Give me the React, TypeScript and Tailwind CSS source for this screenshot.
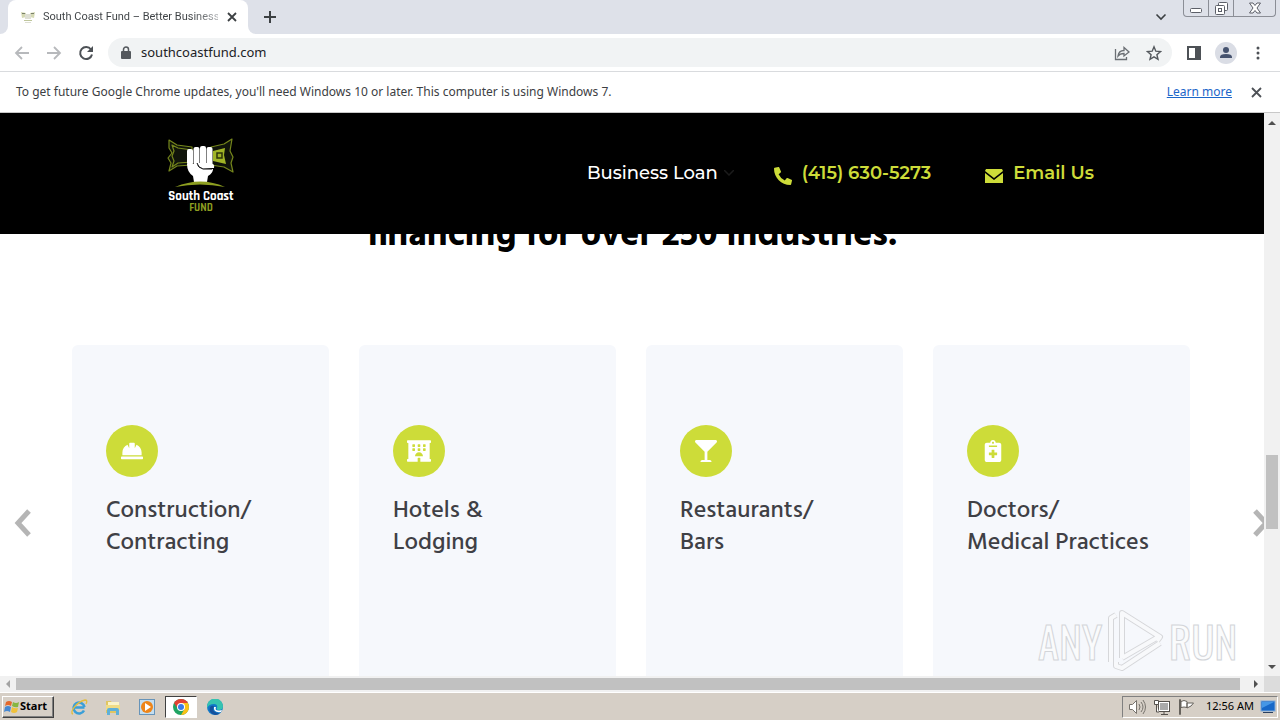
import type { ReactNode } from "react";
import { FaGlassMartini, FaHardHat, FaHotel, FaNotesMedical, FaPhoneAlt } from "react-icons/fa";

interface Industry {
  lines: [string, string];
  icon: ReactNode;
}

const industries: Industry[] = [
  { lines: ["Construction/", "Contracting"], icon: <FaHardHat size={22} /> },
  { lines: ["Hotels &", "Lodging"], icon: <FaHotel size={24} /> },
  { lines: ["Restaurants/", "Bars"], icon: <FaGlassMartini size={22} /> },
  { lines: ["Doctors/", "Medical Practices"], icon: <FaNotesMedical size={22} /> },
];

function SiteLogo() {
  return (
    <svg width="70" height="80" viewBox="0 0 70 80" role="img" aria-label="South Coast Fund">
      <g fill="#10140a" stroke="#75861c" strokeWidth="1.2" strokeLinejoin="round">
        <path d="M4 6l8 5 15 2v18l-15 1-8 5 2-8-3-5 4-5-3-5z" />
        <path d="M7 11l6 3 14 2v12l-14 1-6 4 2-6-2-5 2-5z" />
        <path d="M67 5l-8 5-13 3v18l13 2 9 5-2-9 2-6-3-6z" />
      </g>
      <path d="M48 17l12-3-1 7 2 9-13-3z" fill="#a0b426" />
      <path d="M52 19h5v5h-5z" fill="#a0b426" stroke="#2c340b" strokeWidth="1.500" />
      <g fill="#fff">
        <rect x="22" y="15" width="6" height="16" rx="2" />
        <rect x="28.500" y="13" width="6" height="18" rx="2" />
        <rect x="35" y="12" width="6" height="19" rx="2" />
        <rect x="41.500" y="13" width="6" height="18" rx="2" />
        <path d="M22 30h10q1 3 5 4l11 1q0 4-5 7l-1 6H29l-1-6q-6-4-6-12z" />
        <path d="M32 29h14q4 1 3 5H37q-4-1-5-5z" />
      </g>
      <path d="M32 29q1 5 6 6h9" fill="none" stroke="#000" strokeWidth="1" />
      <path d="M10 53q26-11 50 0-25-5-50 0z" fill="#8d9e20" />
      <text x="36" y="66" textAnchor="middle" fill="#fff" fontFamily="Rajdhani, Roboto, sans-serif" fontWeight="700" fontSize="13">South Coast</text>
      <text x="36" y="77" textAnchor="middle" fill="#8d9e20" fontFamily="Rajdhani, Roboto, sans-serif" fontWeight="700" fontSize="11">FUND</text>
    </svg>
  );
}

function TabStrip() {
  return (
    <div className="flex h-[34px] shrink-0 items-stretch bg-[#dee1e9]">
      <div className="flex w-2 shrink-0 bg-white">
        <div className="flex-1 rounded-br-lg bg-[#dee1e9]" />
      </div>
      <div className="flex w-60 shrink-0 items-center rounded-t-lg bg-white pr-2 pl-3">
        <svg width="16" height="16" viewBox="0 0 16 16">
          <path d="M1 3l5 1v4L2 9zM15 3l-5 1v4l4 1z" fill="#d5d9b4" />
          <path d="M2 4h3v1H2zM11 4h3v1h-3z" fill="#79806b" />
          <path d="M5 5h6v5H5zM5 13h6v1H5z" fill="#dedfd4" />
          <path d="M4 11h8v1H4z" fill="#bfc69c" />
        </svg>
        <span className="ml-[7px] w-[175px] bg-linear-to-r from-[#3c4043] from-85% to-[#b4b6b9] bg-clip-text font-['Roboto'] text-[11px] whitespace-nowrap text-transparent">
          South Coast Fund – Better Business
        </span>
        <button type="button" aria-label="Close tab" className="ml-[6px] flex size-4 items-center justify-center">
          <svg width="10" height="10" viewBox="0 0 10 10" stroke="#3c4043" strokeWidth="1.800"><path d="M1 1l8 8M9 1L1 9" /></svg>
        </button>
      </div>
      <div className="flex w-2 shrink-0 bg-white">
        <div className="flex-1 rounded-bl-lg bg-[#dee1e9]" />
      </div>
      <button type="button" aria-label="New tab" className="flex w-7 items-center justify-center">
        <svg width="12" height="12" viewBox="0 0 12 12" stroke="#3c4043" strokeWidth="2"><path d="M6 0v12M0 6h12" /></svg>
      </button>
      <button type="button" aria-label="Search tabs" className="mr-4 ml-auto flex items-center">
        <svg width="12" height="8" viewBox="0 0 12 8" fill="none" stroke="#3c4043" strokeWidth="1.600"><path d="M1.500 1.500l4.500 4.500 4.500-4.500" /></svg>
      </button>
      <div className="mr-1 flex h-[17px] rounded-b border border-t-0 border-[#8b8e96]">
        <button type="button" aria-label="Minimize" className="flex w-[25px] items-end justify-center border-r border-[#8b8e96] pb-[3px]">
          <svg width="12" height="5" viewBox="0 0 12 5"><rect x=".5" y=".5" width="11" height="4" rx="1" fill="#fff" stroke="#5c5f68" /></svg>
        </button>
        <button type="button" aria-label="Restore" className="flex w-[25px] items-center justify-center border-r border-[#8b8e96]">
          <svg width="13" height="13" viewBox="0 0 13 13" fill="#fff" stroke="#5c5f68">
            <rect x="3.500" y=".5" width="9" height="8" rx="1" />
            <rect x=".5" y="3.500" width="9" height="9" rx="1" />
            <rect x="3.500" y="6.500" width="3" height="3" />
          </svg>
        </button>
        <button type="button" aria-label="Close window" className="flex w-[41px] items-center justify-center">
          <svg width="12" height="12" viewBox="0 0 12 12" fill="#fff" stroke="#5c5f68"><path d="M.5 1h3.500l2 2.500L8 1h3.500L8 6l3.500 5H8L6 8.500 4 11H.5L4 6z" /></svg>
        </button>
      </div>
    </div>
  );
}

function Toolbar() {
  return (
    <div className="flex h-[38px] shrink-0 items-center border-b border-[#d9dbde] bg-white pr-[14px] pl-[14px]">
      <button type="button" aria-label="Back" className="flex size-4 items-center justify-center">
        <svg width="16" height="14" viewBox="0 0 16 14" fill="none" stroke="#b7b9bc" strokeWidth="1.800"><path d="M15 7H2M8 1L2 7l6 6" /></svg>
      </button>
      <button type="button" aria-label="Forward" className="ml-4 flex size-4 items-center justify-center">
        <svg width="16" height="14" viewBox="0 0 16 14" fill="none" stroke="#b7b9bc" strokeWidth="1.800"><path d="M1 7h13M8 1l6 6-6 6" /></svg>
      </button>
      <button type="button" aria-label="Reload" className="ml-4 flex size-4 items-center justify-center">
        <svg width="16" height="16" viewBox="0 0 16 16"><path d="M13 4.500A6 6 0 1 0 14 9.500" fill="none" stroke="#4d5156" strokeWidth="2" /><path d="M15 1v6H9z" fill="#4d5156" /></svg>
      </button>
      <div className="ml-[14px] flex h-[29px] flex-1 items-center rounded-full bg-[#f1f3f4] pr-[10px] pl-3">
        <svg width="12" height="14" viewBox="0 0 12 14"><rect x="1" y="5" width="10" height="8" rx="1" fill="#54585d" /><path d="M3.500 6V3.500a2.500 2.500 0 0 1 5 0V6" fill="none" stroke="#54585d" strokeWidth="1.500" /></svg>
        <input aria-label="Address" defaultValue="southcoastfund.com" className="ml-[9px] min-w-0 flex-1 bg-transparent text-[13px] text-[#202124] outline-none" />
        <button type="button" aria-label="Share">
          <svg width="16" height="16" viewBox="0 0 16 16" fill="none" stroke="#6b6f74" strokeWidth="1.300"><path d="M1.500 4v10.500h11V12M4 11c.5-4 3-5.500 6-5.500V2.500L15 7l-5 4V8.500C7.500 8.500 5.500 9 4 11z" /></svg>
        </button>
        <button type="button" aria-label="Bookmark" className="ml-4">
          <svg width="16" height="16" viewBox="0 0 16 16" fill="none" stroke="#54585d" strokeWidth="1.400"><path d="M8 1.800l1.800 4.400 4.700.4-3.600 3.100 1.100 4.600L8 11.800l-4 2.500 1.100-4.600-3.600-3.100 4.700-.4z" /></svg>
        </button>
      </div>
      <button type="button" aria-label="Side panel" className="ml-[14px]">
        <svg width="16" height="16" viewBox="0 0 16 16"><path d="M2 2h12v12H2z" fill="none" stroke="#4d5156" strokeWidth="2" /><path d="M9 2h5v12H9z" fill="#4d5156" /></svg>
      </button>
      <button type="button" aria-label="Profile" className="ml-[13px]">
        <svg width="22" height="22" viewBox="0 0 22 22"><circle cx="11" cy="11" r="11" fill="#dadde5" /><circle cx="11" cy="8" r="3" fill="#46536f" /><path d="M5 16v-1q0-3 6-3t6 3v1z" fill="#46536f" /></svg>
      </button>
      <button type="button" aria-label="Menu" className="ml-[13px]">
        <svg width="16" height="16" viewBox="0 0 16 16" fill="#4d5156"><circle cx="8" cy="3" r="1.500" /><circle cx="8" cy="8" r="1.500" /><circle cx="8" cy="13" r="1.500" /></svg>
      </button>
    </div>
  );
}

function UpdateNotice() {
  return (
    <div className="flex h-[41px] shrink-0 items-center border-b border-[#c8c8c8] bg-white px-4 text-xs text-[#3c4043]">
      <p>To get future Google Chrome updates, you'll need Windows 10 or later. This computer is using Windows 7.</p>
      <a href="#" className="ml-auto text-[#1b66c9] underline">Learn more</a>
      <button type="button" aria-label="Dismiss" className="ml-4 flex size-4 items-center justify-center">
        <svg width="11" height="11" viewBox="0 0 11 11" stroke="#4d5156" strokeWidth="1.800"><path d="M1 1l9 9M10 1L1 10" /></svg>
      </button>
    </div>
  );
}

function SiteHeader() {
  return (
    <header className="z-10 flex h-[121px] shrink-0 items-center justify-between bg-black pr-[170px] pl-[165px]">
      <a href="#"><SiteLogo /></a>
      <nav className="flex items-center pb-px font-['Montserrat','Inter',sans-serif] text-lg font-medium">
        <a href="#" className="flex items-center text-white">
          Business Loan
          <svg className="ml-[6px]" width="10" height="6" viewBox="0 0 10 6" fill="none" stroke="#1b1b1b" strokeWidth="1.500"><path d="M0 0l5 5 5-5" /></svg>
        </a>
        <a href="tel:4156305273" className="ml-10 flex items-center font-semibold text-[#cddc39]">
          <FaPhoneAlt size={18} className="mt-[6px] mr-[10px] -scale-x-100 rotate-90" />
          (415) 630-5273
        </a>
        <a href="#" className="ml-[54px] flex items-center font-semibold text-[#cddc39]">
          <svg className="mt-[6px] mr-[10px]" width="18" height="16" viewBox="0 0 18 16"><path d="M1 1h16l1 2-9 7-9-7z" fill="#cddc39" /><path d="M0 5l9 7 9-7v10H0z" fill="#cddc39" /></svg>
          Email Us
        </a>
      </nav>
    </header>
  );
}

function IndustryCard({ lines, icon }: Industry) {
  return (
    <li className="rounded-md bg-[#f6f8fc] px-[34px] pt-20 pb-32">
      <div className="flex size-[52px] items-center justify-center rounded-full bg-[#cddc39] text-white">{icon}</div>
      <h3 className="mt-[18px] text-2xl leading-8 font-medium whitespace-nowrap text-[#3f4045]">
        {lines[0]}
        <br />
        {lines[1]}
      </h3>
    </li>
  );
}

function Watermark() {
  return (
    <svg className="absolute right-[40px] bottom-[18px] z-20" width="204" height="68" viewBox="0 0 204 68" role="img" aria-label="ANY RUN">
      <g fill="#fafbfc" stroke="#d3d5d9" strokeWidth="1" fontFamily="Oswald, 'DejaVu Sans Condensed', sans-serif" fontSize="43" fontWeight="400">
        <text x="2" y="54">ANY</text>
        <text x="133" y="54">RUN</text>
      </g>
      <g fill="none" strokeLinejoin="round">
        <path d="M75 56V12l5-3M86 52V7l38 24-3 4M86 52l38-22M80 56v4l6 2 38-25" stroke="#d6d7da" strokeWidth="6" />
        <path d="M75 56V12l5-3M86 52V7l38 24-3 4M86 52l38-22M80 56v4l6 2 38-25" stroke="#f8f9fb" strokeWidth="4" />
      </g>
    </svg>
  );
}

function VerticalScrollbar() {
  return (
    <div className="flex w-4 shrink-0 flex-col items-center bg-[#f1f1f1]">
      <button type="button" aria-label="Scroll up" className="flex h-5 items-center">
        <svg width="8" height="4" viewBox="0 0 8 4"><path d="M0 4l4-4 4 4z" fill="#505050" /></svg>
      </button>
      <div className="flex w-3 flex-1 flex-col">
        <div className="flex-[321]" />
        <div className="flex-[74] bg-[#c1c1c1]" />
        <div className="flex-[129]" />
      </div>
      <button type="button" aria-label="Scroll down" className="flex h-[18px] items-center">
        <svg width="8" height="4" viewBox="0 0 8 4"><path d="M0 0l4 4 4-4z" fill="#505050" /></svg>
      </button>
    </div>
  );
}

function HorizontalScrollbar() {
  return (
    <div className="flex h-4 shrink-0 items-center bg-[#f1f1f1]">
      <button type="button" aria-label="Scroll left" className="flex w-4 justify-center">
        <svg width="4" height="8" viewBox="0 0 4 8"><path d="M4 0L0 4l4 4z" fill="#a3a3a3" /></svg>
      </button>
      <div className="h-3 flex-1 bg-[#c1c1c1]" />
      <button type="button" aria-label="Scroll right" className="ml-2 flex w-4 justify-center">
        <svg width="4" height="8" viewBox="0 0 4 8"><path d="M0 0l4 4-4 4z" fill="#505050" /></svg>
      </button>
      <div className="h-4 w-4 bg-[#dcdcdc]" />
    </div>
  );
}

function Taskbar() {
  return (
    <footer className="flex h-7 shrink-0 items-center border-t border-white bg-[#d6cfc6] shadow-[0_-1px_0_#d6cfc6]">
      <button type="button" className="ml-[2px] flex h-[22px] w-[52px] items-center border border-t-white border-r-[#404040] border-b-[#404040] border-l-white px-px text-[11px] font-bold text-black shadow-[inset_-1px_-1px_0_#808080]">
        <svg width="16" height="15" viewBox="0 0 16 15">
          <path d="M2 3q3-2 6 0L7 7Q4 5 1 7z" fill="#e3682c" />
          <path d="M9 3q3 2 6 0l-1 5q-3 1-6-1z" fill="#86b640" />
          <path d="M1 8q3-2 6 0l-1 5q-3-2-6 0z" fill="#4688d2" />
          <path d="M8 8q3 2 6 1l-1 4q-3 2-6 0z" fill="#f0c13a" />
        </svg>
        Start
      </button>
      <button type="button" aria-label="Internet Explorer" className="ml-4 flex w-[18px] justify-center">
        <svg width="18" height="18" viewBox="0 0 18 18" fill="none">
          <path d="M14.500 9.500H4.500M14 12.500A5.500 5.500 0 1 1 14.500 9" stroke="#3a9fd8" strokeWidth="2.600" />
          <path d="M3 16C-1 15 6 4 15 2q3 0 1 4" stroke="#e4bd3d" strokeWidth="1.300" />
        </svg>
      </button>
      <button type="button" aria-label="Explorer" className="ml-4 flex w-[18px] justify-center">
        <svg width="18" height="18" viewBox="0 0 18 18">
          <path d="M2 3h5l1 2h7v10H2z" fill="#e0c662" />
          <path d="M4 4h11v5H4z" fill="#fbf4c9" />
          <path d="M2 7h14v5H2z" fill="#f0dc85" />
          <path d="M3 17v-5q0-2 2-2h8q2 0 2 2v5h-3v-4H6v4z" fill="#5fb0d8" />
        </svg>
      </button>
      <button type="button" aria-label="Media Player" className="ml-4 flex w-[18px] justify-center">
        <svg width="16" height="16" viewBox="0 0 16 16">
          <rect x=".5" y=".5" width="15" height="15" fill="#c4def0" stroke="#6794b9" />
          <circle cx="8" cy="8" r="6" fill="#ee8519" />
          <path d="M6 4l6 4-6 4z" fill="#fff" />
        </svg>
      </button>
      <button type="button" aria-label="Chrome" className="ml-[9px] flex h-[22px] w-8 items-center justify-center border border-t-[#404040] border-r-white border-b-white border-l-[#404040] bg-white">
        <svg width="16" height="16" viewBox="0 0 16 16">
          <circle cx="8" cy="8" r="8" fill="#1fa463" />
          <path d="M8 8L1.100 4A8 8 0 0 1 14.900 4z" fill="#e34133" />
          <path d="M8 4h6.900A8 8 0 0 1 8 16l3.500-6z" fill="#fbc116" />
          <path d="M1.100 4L5 10l3-6z" fill="#e34133" />
          <circle cx="8" cy="8" r="4" fill="#fff" />
          <circle cx="8" cy="8" r="3" fill="#397be8" />
        </svg>
      </button>
      <button type="button" aria-label="Edge" className="ml-[10px]">
        <svg width="16" height="16" viewBox="0 0 16 16">
          <circle cx="8" cy="8" r="8" fill="#1279c8" />
          <path d="M0 8a8 8 0 0 1 16-1q0 4-4 4-3 0-2-2 1-4-3-4-5 0-7 4z" fill="#36c3b0" />
          <path d="M7 7q-3 5 3 7 3 1 4-1-2 3-6 3-7-2-5-8 2-2 4-1z" fill="#15519d" />
          <path d="M9 8q-2 5 6 3l-1 2Q6 14 7 8z" fill="#fff" />
        </svg>
      </button>
      <div className="mr-[2px] ml-auto flex h-[22px] items-center border border-t-[#808080] border-r-white border-b-white border-l-[#808080] pr-px pl-[6px] text-[11px] text-black">
        <svg width="17" height="16" viewBox="0 0 17 16" fill="none" stroke="#77736d">
          <path d="M.5 5.500h3l4-4v13l-4-4h-3z" fill="#fff" />
          <path d="M10 5q2 3 0 6M12 3q4 5 0 10M14 1q5 7 0 14" />
        </svg>
        <svg className="ml-2" width="16" height="16" viewBox="0 0 16 16" fill="#fff" stroke="#55514c">
          <rect x="4.500" y="2.500" width="11" height="10" />
          <path d="M6 4h8v7H6z" fill="#aaa" stroke="none" />
          <path d="M7 15.500h7M10 13v2M.5 1.500h4v4h-4zM2.500 6v7H5" />
        </svg>
        <svg className="ml-2" width="16" height="16" viewBox="0 0 16 16" fill="#fff" stroke="#66625c">
          <path d="M1.500.5h1v15h-1zM3 2.500q3-2 6 0v6q-3-1-6 0zM9 4h6.500L13 7l-4 2z" />
        </svg>
        <time className="ml-3">12:56 AM</time>
        <svg className="ml-[6px]" width="16" height="14" viewBox="0 0 16 14">
          <rect x="1" y="1" width="14" height="10" fill="#1768c8" stroke="#7fa9d8" />
          <path d="M2 2h12L2 8z" fill="#4597e6" />
          <path d="M3 12h10v1H3z" fill="#293f60" />
        </svg>
      </div>
    </footer>
  );
}

export default function App() {
  return (
    <div className="flex h-screen flex-col overflow-hidden bg-white font-['Tahoma','Noto_Sans',sans-serif]">
      <TabStrip />
      <Toolbar />
      <UpdateNotice />
      <div className="flex min-h-0 flex-1">
        <div className="relative flex min-w-0 flex-1 flex-col overflow-hidden">
          <SiteHeader />
          <main className="min-h-0 flex-1 font-['Hind','Noto_Sans',sans-serif]">
            <h2 className="-mt-[22px] text-center text-[36px] leading-[48px] font-bold text-black">financing for over 250 industries.</h2>
            <section className="mt-[85px] flex items-start">
              <button type="button" aria-label="Previous" className="mt-[164px] ml-[14px] w-[58px] shrink-0">
                <svg width="17" height="28" viewBox="0 0 17 28" fill="none" stroke="#b5b5b5" strokeWidth="5"><path d="M15 2L4 14l11 12" /></svg>
              </button>
              <ul className="grid min-w-0 flex-1 grid-cols-4 gap-[30px]">
                {industries.map((industry) => (
                  <IndustryCard key={industry.lines[0]} {...industry} />
                ))}
              </ul>
              <button type="button" aria-label="Next" className="mt-[164px] flex w-[74px] shrink-0 justify-end overflow-hidden">
                <svg width="11" height="28" viewBox="0 0 11 28" fill="none" stroke="#b5b5b5" strokeWidth="5"><path d="M2 2l11 12L2 26" /></svg>
              </button>
            </section>
          </main>
        </div>
        <VerticalScrollbar />
      </div>
      <div className="relative">
        <Watermark />
        <HorizontalScrollbar />
      </div>
      <Taskbar />
    </div>
  );
}
